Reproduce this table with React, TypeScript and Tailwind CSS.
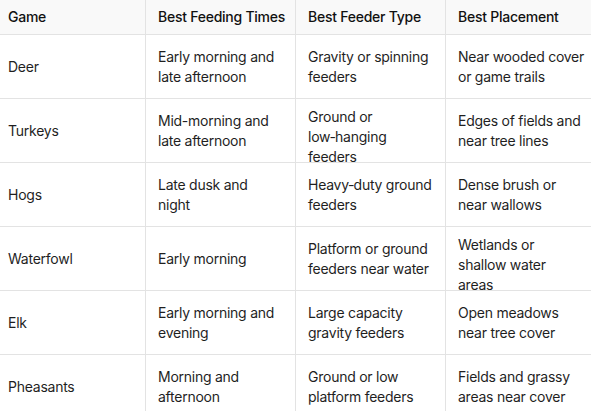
const rows = [
  ["Deer", "Early morning and late afternoon", "Gravity or spinning feeders", "Near wooded cover or game trails"],
  ["Turkeys", "Mid-morning and late afternoon", "Ground or low\u2011hanging feeders", "Edges of fields and near tree lines"],
  ["Hogs", "Late dusk and night", "Heavy\u2011duty ground feeders", "Dense brush or near wallows"],
  ["Waterfowl", "Early morning", "Platform or ground feeders near water", "Wetlands or\nshallow water\nareas"],
  ["Elk", "Early morning and evening", "Large capacity gravity feeders", "Open meadows near tree cover"],
  ["Pheasants", "Morning and afternoon", "Ground or low platform feeders", "Fields and grassy areas near cover"],
];

const headers = ["Game", "Best Feeding Times", "Best Feeder Type", "Best Placement"];

// right padding per column, tuned so lines wrap where the original does
const padRight = ["pr-2", "pr-5", "pr-2", "pr-[11px]"];

export default function App() {
  return (
    <div className="w-[591px] h-[411px] overflow-hidden bg-white font-['Inter',sans-serif] text-[14px] leading-5 tracking-[-0.25px] text-[#1f1f1f]">
      <div className="grid w-[596px] grid-cols-[146px_150px_150px_150px]">
        {headers.map((h, i) => (
          <div
            key={h}
            className={`flex h-[35px] items-center border-b border-[#e3e3e3] bg-[#f9f9f9] font-medium text-[#111] ${
              i === 0 ? "pl-2" : "pl-3"
            } ${i < 3 ? "border-r" : ""}`}
          >
            {h}
          </div>
        ))}
        {rows.map((r) =>
          r.map((c, i) => (
            <div
              key={r[0] + i}
              className={`flex h-16 items-center whitespace-pre-line border-b border-[#e3e3e3] ${padRight[i]} ${
                i === 0 ? "pl-2" : "pl-3"
              } ${i < 3 ? "border-r" : ""} ${c.includes("hanging") || c.includes("\n") ? "pt-3" : ""}`}
            >
              {c}
            </div>
          ))
        )}
      </div>
    </div>
  );
}
